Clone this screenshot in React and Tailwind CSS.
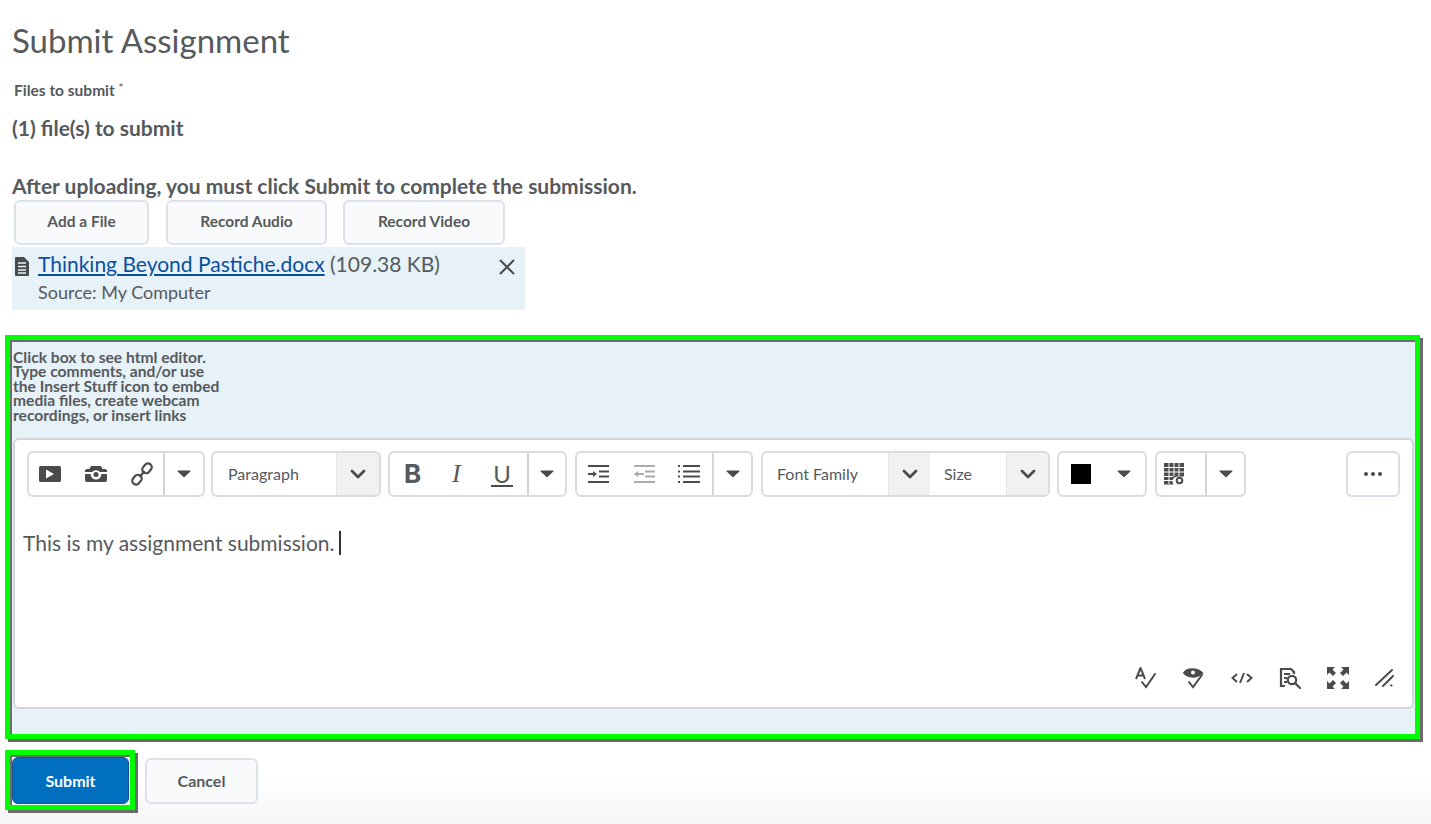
import React from "react";

const ic = "#494c4e";

function Caret() {
  return <svg width="14" height="8" viewBox="0 0 14 8"><path d="M1 .5h12a.6.6 0 0 1 .4 1L7.5 7a.7.7 0 0 1-1 0L.6 1.5A.6.6 0 0 1 1 .5z" fill={ic} /></svg>;
}
function Chevron() {
  return <svg width="16" height="10" viewBox="0 0 16 10"><path d="M2 2l6 6 6-6" fill="none" stroke={ic} strokeWidth="2.8" strokeLinecap="round" strokeLinejoin="round" /></svg>;
}
function Group({ className, children }) {
  return <div className={"flex h-[46px] items-stretch rounded-md border-2 border-[#d9dbde] bg-white " + className}>{children}</div>;
}
function CaretCell({ w }) {
  return <div className={"flex items-center justify-center border-l-2 border-[#d3d5d8] " + w}><Caret /></div>;
}
function Select({ label, w, cw, pl }) {
  return (
    <div className={"flex items-stretch " + w}>
      <div className={"flex flex-1 items-center text-[16px] text-[#565a5c] " + pl}>{label}</div>
      <div className={"flex items-center justify-center border-l border-[#e3e5e8] bg-[#f0f1f3] " + cw}><Chevron /></div>
    </div>
  );
}
function Btn({ w, children }) {
  return <button className={"flex h-[45px] items-center justify-center rounded-md border-2 border-[#dde1ea] bg-[#f9fafb] pb-[2px] text-[15.5px] font-bold text-[#565a5c] " + w}>{children}</button>;
}

export default function App() {
  return (
    <div className="relative h-[824px] w-[1431px] overflow-hidden bg-gradient-to-b from-white from-[94%] to-[#f6f6f6] text-[#565a5c]" style={{ fontFamily: "Lato, sans-serif" }}>
      <div className="flex flex-col">
        <h1 className="ml-3 mt-[18px] h-[44px] text-[33px] leading-[44px]">Submit Assignment</h1>
        <div className="ml-[14px] mt-[19px] h-[18px] text-[15.5px] font-bold leading-[18px]">Files to submit <span className="align-top text-[12px] font-normal leading-[14px]">*</span></div>
        <div className="ml-3 mt-[17px] h-[24px] text-[21px] font-bold leading-[24px]">(1) file(s) to submit</div>
        <div className="ml-3 mt-[34px] h-[24px] text-[21px] font-bold leading-[24px]">After uploading, you must click Submit to complete the submission.</div>
        <div className="ml-[14px] mt-[2px] flex">
          <Btn w="w-[135px]">Add a File</Btn>
          <Btn w="ml-[17px] w-[161px]">Record Audio</Btn>
          <Btn w="ml-[16px] w-[162px]">Record Video</Btn>
        </div>
        <div className="ml-3 mt-[2px] flex h-[63px] w-[513px] bg-[#e6f1f8]">
          <svg className="ml-[2px] mt-[9px]" width="16" height="21" viewBox="0 0 16 21"><path d="M2 1h8l5 5v13a1 1 0 0 1-1 1H2a1 1 0 0 1-1-1V2a1 1 0 0 1 1-1z" fill={ic} /><path d="M4 7h8M4 10.500h8M4 14h8M4 17h8" stroke="#e6f1f8" strokeWidth="1.400" /></svg>
          <div className="ml-[8px] flex-1">
            <div className="mt-[3px] h-[28px] text-[21px] leading-[28px]"><a className="text-[#0a4f9e] underline">Thinking Beyond Pastiche.docx</a> (109.38 KB)</div>
            <div className="mt-[2px] text-[18px] leading-[24px]">Source: My Computer</div>
          </div>
          <svg className="mr-[9px] mt-[11px]" width="18" height="18" viewBox="0 0 18 18"><path d="M2 2l14 14M16 2L2 16" stroke={ic} strokeWidth="2" /></svg>
        </div>

        <div className="ml-[5px] mt-[25px] h-[404px] w-[1415px] border-[5px] border-[#00ff00] shadow-[3px_3px_0_#6b6b6b]">
          <div className="flex h-full flex-col border-2 border-[#6e6e6e] border-r-0 border-b-0 bg-[#e6f1f8] pr-[1px]">
            <div className="h-[96px] pl-[1px] pt-[8px] text-[15.6px] font-bold leading-[14.4px]">
              Click box to see html editor.<br />Type comments, and/or use<br />the Insert Stuff icon to embed<br />media files, create webcam<br />recordings, or insert links
            </div>
            <div className="ml-[1px] flex h-[271px] flex-col rounded-md border-2 border-[#d3d6d9] bg-white">
              <div className="ml-[12px] mt-[11px] flex">
                <Group className="w-[178px]">
                  <div className="flex flex-1 items-center justify-between pl-[10px] pr-[10px]">
                    <svg width="22" height="16" viewBox="0 0 22 16"><rect width="22" height="16" rx="1.500" fill={ic} /><path d="M7 3.500v9l8-4.500z" fill="#fff" /></svg>
                    <svg width="22" height="16" viewBox="0 0 22 16"><path d="M6 0h10l1.500 3H20a2 2 0 0 1 2 2v1H15a5.500 5.500 0 0 0-8 0H0V5a2 2 0 0 1 2-2h2.500zM0 8h5.500a5.500 5.500 0 0 0 11 0H22v6a2 2 0 0 1-2 2H2a2 2 0 0 1-2-2z" fill={ic} /><circle cx="11" cy="8.500" r="2.500" fill={ic} /></svg>
                    <svg width="22" height="24" viewBox="0 0 22 24" fill="none" stroke={ic} strokeWidth="2.200"><rect x="1" y="14" width="10.500" height="7.500" rx="3.700" transform="rotate(-50 6 18)" /><rect x="10.500" y="2.500" width="10.500" height="7.500" rx="3.700" transform="rotate(-50 16 6)" /><path d="M8.500 15l5-6" /></svg>
                  </div>
                  <CaretCell w="w-[40px]" />
                </Group>
                <Group className="ml-[6px] w-[170px] overflow-hidden">
                  <Select label="Paragraph" w="w-full" cw="w-[43px]" pl="pl-[15px]" />
                </Group>
                <Group className="ml-[7px] w-[179px]">
                  <div className="flex flex-1 items-center justify-between pl-[14px] pr-[14px]">
                    <span className="text-[26px] font-bold leading-none text-[#565a5c]" style={{ fontFamily: "Inter, sans-serif" }}>B</span>
                    <span className="text-[26px] italic leading-none text-[#565a5c]" style={{ fontFamily: "Liberation Serif, serif" }}>I</span>
                    <span className="border-b-[2.500px] border-[#494c4e] px-[2px] text-[24px] leading-[23px]">U</span>
                  </div>
                  <CaretCell w="w-[38px]" />
                </Group>
                <Group className="ml-[8px] w-[178px]">
                  <div className="flex flex-1 items-center justify-between pl-[10px] pr-[12px]">
                    <svg width="22" height="20" viewBox="0 0 22 20" stroke={ic} strokeWidth="2" fill="none"><path d="M1 2h21M12 7.500h10M12 12.500h10M1 18h21M1 10h7" /><path d="M6 7l4 3-4 3z" fill={ic} strokeWidth="0" /></svg>
                    <svg width="22" height="20" viewBox="0 0 22 20" stroke="#a9abad" strokeWidth="2" fill="none"><path d="M1 2h21M12 7.500h10M12 12.500h10M1 18h21M4 10h7" /><path d="M5 7l-4 3 4 3z" fill="#a9abad" strokeWidth="0" /></svg>
                    <svg width="22" height="20" viewBox="0 0 22 20" stroke={ic} strokeWidth="2" fill="none"><path d="M5 2h17M5 7.500h17M5 12.500h17M5 18h17M0 2h2M0 7.500h2M0 12.500h2M0 18h2" /></svg>
                  </div>
                  <CaretCell w="w-[39px]" />
                </Group>
                <Group className="ml-[8px] w-[289px] overflow-hidden">
                  <Select label="Font Family" w="w-[167px]" cw="w-[42px]" pl="pl-[14px]" />
                  <Select label="Size" w="w-[118px]" cw="w-[42px]" pl="pl-[14px]" />
                </Group>
                <Group className="ml-[7px] w-[90px]">
                  <div className="flex flex-1 items-center">
                    <div className="ml-[12px] h-[20px] w-[20px] bg-black" />
                    <div className="ml-[26px] flex"><Caret /></div>
                  </div>
                </Group>
                <Group className="ml-[8px] w-[91px]">
                  <div className="flex flex-1 items-center pl-[7px]">
                    <svg width="21" height="22" viewBox="0 0 21 22"><path d="M0 0h20v13.500h-6a5 5 0 0 0-4.500 8H0z" fill={ic} /><path d="M5 0v21M10 0v13M15 0v13M0 4.500h20M0 9h20M0 13.500h9.500M0 17.500h9" stroke="#fff" strokeWidth="1" /><circle cx="15.500" cy="17.500" r="2.800" fill="none" stroke={ic} strokeWidth="2" /></svg>
                  </div>
                  <CaretCell w="w-[39px]" />
                </Group>
                <div className="ml-[100px] flex h-[46px] w-[54px] items-center justify-center gap-[3px] rounded-md border-2 border-[#d9dde8]">
                  <span className="h-[4px] w-[4px] rounded-full bg-[#494c4e]" /><span className="h-[4px] w-[4px] rounded-full bg-[#494c4e]" /><span className="h-[4px] w-[4px] rounded-full bg-[#494c4e]" />
                </div>
              </div>
              <div className="ml-[8px] mt-[32px] flex h-[28px] items-center text-[21px] leading-[28px]">
                This is my assignment submission.
                <span className="ml-[5px] h-[24px] w-[1.500px] bg-[#333]" />
              </div>
              <div className="mr-[17px] mt-[109px] flex h-[24px] items-center justify-end gap-[26px]">
                <svg width="22" height="22" viewBox="0 0 22 22" fill="none" stroke={ic} strokeWidth="2"><path d="M1 12L5.500 1 10 12M3 8.500h5" /><path d="M7 15l4 5 9-13" strokeLinecap="round" /></svg>
                <svg width="22" height="22" viewBox="0 0 22 22" fill="none" stroke={ic} strokeWidth="2"><path d="M1 6c3-5 13-5 18 0-5 5-14 5-18 0z" fill={ic} /><circle cx="10" cy="5.500" r="2" fill="#fff" stroke="none" /><path d="M6 15l4 5 9-12" strokeLinecap="round" /></svg>
                <svg width="22" height="14" viewBox="0 0 22 14" fill="none" stroke={ic} strokeWidth="2"><path d="M6 3L1.500 7 6 11M16 3l4.500 4L16 11M13 2L9 12" /></svg>
                <svg width="22" height="22" viewBox="0 0 22 22" fill="none" stroke={ic} strokeWidth="2.200"><path d="M6 19H2V2h10l3 3v2M5 7h6M5 11h3M5 15h3" /><circle cx="13" cy="13" r="4.200" /><path d="M16 16l5 5" strokeLinecap="round" /></svg>
                <svg width="22" height="22" viewBox="0 0 22 22" fill={ic} stroke="none"><path d="M0 0h8L5.500 2.500 9 6 6 9 2.500 5.500 0 8zM22 0v8l-2.500-2.500L16 9l-3-3 3.500-3.500L14 0zM0 22v-8l2.500 2.500L6 13l3 3-3.500 3.500L8 22zM22 22h-8l2.500-2.500L13 16l3-3 3.500 3.500L22 14z" /></svg>
                <svg width="20" height="20" viewBox="0 0 20 20" fill="none" stroke={ic} strokeWidth="2" strokeLinecap="round"><path d="M1 17L17 2M8 18l10-10M16 17.500h.500" /></svg>
              </div>
            </div>
          </div>
        </div>

        <div className="ml-[5px] mt-[11px] flex items-start">
          <div className="h-[60px] w-[130px] border-[5px] border-[#00ff00] shadow-[3px_3px_0_#6b6b6b]">
            <div className="h-full border-l-2 border-t-2 border-[#6e6e6e]">
              <button className="h-[47px] w-[117px] rounded-md border border-[#1c4f87] bg-[#006fbf] text-[16px] font-bold text-white">Submit</button>
            </div>
          </div>
          <button className="ml-[10px] mt-[8px] h-[46px] w-[113px] rounded-md border-2 border-[#dde1ea] bg-[#f9fafb] text-[16px] font-bold text-[#565a5c]">Cancel</button>
        </div>
      </div>
    </div>
  );
}
